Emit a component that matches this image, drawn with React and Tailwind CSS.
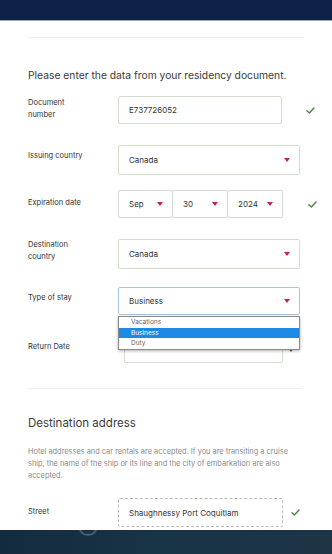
import React from 'react';

const Check = ({ className = '' }) => (
    <svg width="9" height="7" viewBox="0 0 9 7" className={`shrink-0 ${className}`}>
        <polyline points="1,3.8 3.4,6 8,1" fill="none" stroke="#4f8a43" strokeWidth="1.5" strokeLinecap="round" strokeLinejoin="round" />
    </svg>
);

const Caret = ({ color = '#c8234d' }) => (
    <svg width="6" height="4" viewBox="0 0 6 4">
        <polygon points="0,0 6,0 3,4" fill={color} />
    </svg>
);

const Select = ({ value, className = '' }) => (
    <div className={`shrink-0 flex items-center justify-between pl-[10px] pr-[9px] bg-white border rounded-[2px] text-[8px] text-[#333] ${className}`}>
        <span>{value}</span>
        <Caret />
    </div>
);

export default function App() {
    return (
        <div className="w-[332px] h-[554px] overflow-hidden bg-white flex flex-col" style={{ fontFamily: 'Inter, "Liberation Sans", sans-serif' }}>
            {/* Top bar */}
            <div className="h-[20px] bg-[#0c2247] shrink-0"></div>
            <div className="h-px bg-[#9aa4b3] shrink-0"></div>

            <div className="px-[28px] flex flex-col shrink-0">
                <div className="mt-[16px] h-px w-[276px] bg-[#eeeeee]"></div>

                <h2 className="mt-[30px] text-[10.3px] leading-[14px] text-[#3a3a3a]">
                    Please enter the data from your residency document.
                </h2>

                {/* Document number */}
                <div className="mt-[14px] flex items-start">
                    <div className="w-[90px] shrink-0 pt-[1px] text-[7.5px] leading-[12px] text-[#333]">Document<br />number</div>
                    <div className="w-[164px] shrink-0 h-[28px] border border-[#d3dccd] rounded-[2px] flex items-center pl-[10px] text-[8px] text-[#333]">E737726052</div>
                    <Check className="ml-[24px] mt-[11px]" />
                </div>

                {/* Issuing country */}
                <div className="mt-[21px] flex items-start">
                    <div className="w-[90px] shrink-0 pt-[5px] text-[7.5px] leading-[12px] text-[#333]">Issuing country</div>
                    <Select value="Canada" className="w-[182px] h-[30px] border-[#cfe0c8]" />
                </div>

                {/* Expiration date */}
                <div className="mt-[15px] flex items-start">
                    <div className="w-[90px] shrink-0 pt-[7px] text-[7.5px] leading-[12px] text-[#333]">Expiration date</div>
                    <div className="flex shrink-0">
                        <Select value="Sep" className="w-[55px] h-[28px] border-[#d8d8d8]" />
                        <Select value="30" className="w-[56px] h-[28px] border-[#d8d8d8] -ml-px" />
                        <Select value="2024" className="w-[56px] h-[28px] border-[#d8d8d8] -ml-px" />
                    </div>
                    <Check className="ml-[25px] mt-[11px]" />
                </div>

                {/* Destination country */}
                <div className="mt-[21px] flex items-start">
                    <div className="w-[90px] shrink-0 text-[7.5px] leading-[12px] text-[#333]">Destination<br />country</div>
                    <Select value="Canada" className="w-[182px] h-[30px] border-[#cfe0c8]" />
                </div>

                {/* Type of stay */}
                <div className="mt-[18px] flex items-start relative z-10">
                    <div className="w-[90px] shrink-0 pt-[5px] text-[7.5px] leading-[12px] text-[#333]">Type of stay</div>
                    <div className="relative shrink-0">
                        <Select value="Business" className="w-[182px] h-[28px] border-[#a9c4e0]" />
                        <div className="absolute left-0 top-[29px] w-[182px] bg-white border border-[#8a8a8a] shadow-[0_1px_3px_rgba(0,0,0,0.3)] text-[6.5px] leading-[10.5px]">
                            <div className="pl-[12px] text-[#666]">Vacations</div>
                            <div className="pl-[12px] bg-[#1e88e5] text-white">Business</div>
                            <div className="pl-[12px] text-[#666]">Duty</div>
                        </div>
                    </div>
                </div>

                {/* Return date */}
                <div className="mt-[22px] flex items-start">
                    <div className="w-[96px] shrink-0 pt-[4px] text-[7.5px] leading-[12px] text-[#333]">Return Date</div>
                    <div className="w-[159px] shrink-0 h-[26px] border border-[#d3dfcd] rounded-[2px]"></div>
                    <div className="ml-[5px] mt-[11px]"><Caret color="#555" /></div>
                </div>

                <div className="mt-[25px] h-px w-[274px] bg-[#eeeeee]"></div>

                <h2 className="mt-[26px] text-[11.5px] leading-[16px] text-[#3a3a3a]">Destination address</h2>

                <p className="mt-[15px] w-[272px] text-[7.4px] leading-[12px] text-[#8a8a8a]">
                    Hotel addresses and car rentals are accepted. If you are transiting a cruise ship, the name of the ship or its line and the city of embarkation are also accepted.
                </p>

                {/* Street */}
                <div className="mt-[16px] flex items-start">
                    <div className="w-[90px] shrink-0 pt-[8px] text-[7.5px] leading-[12px] text-[#333]">Street</div>
                    <div className="w-[165px] shrink-0 h-[29px] border border-dashed border-[#bdbdbd] rounded-[2px] flex items-center pl-[10px] text-[8px] text-[#333]">Shaughnessy Port Coquitlam</div>
                    <Check className="ml-[8px] mt-[11px]" />
                </div>
            </div>

            {/* Bottom bar */}
            <div className="mt-[3px] flex-1 bg-gradient-to-r from-[#132c3d] via-[#183447] to-[#1d3545] relative overflow-hidden">
                <div className="absolute left-[78px] -top-[14px] w-[20px] h-[20px] rounded-full border-2 border-[#4a5f6c]"></div>
            </div>
        </div>
    );
}
